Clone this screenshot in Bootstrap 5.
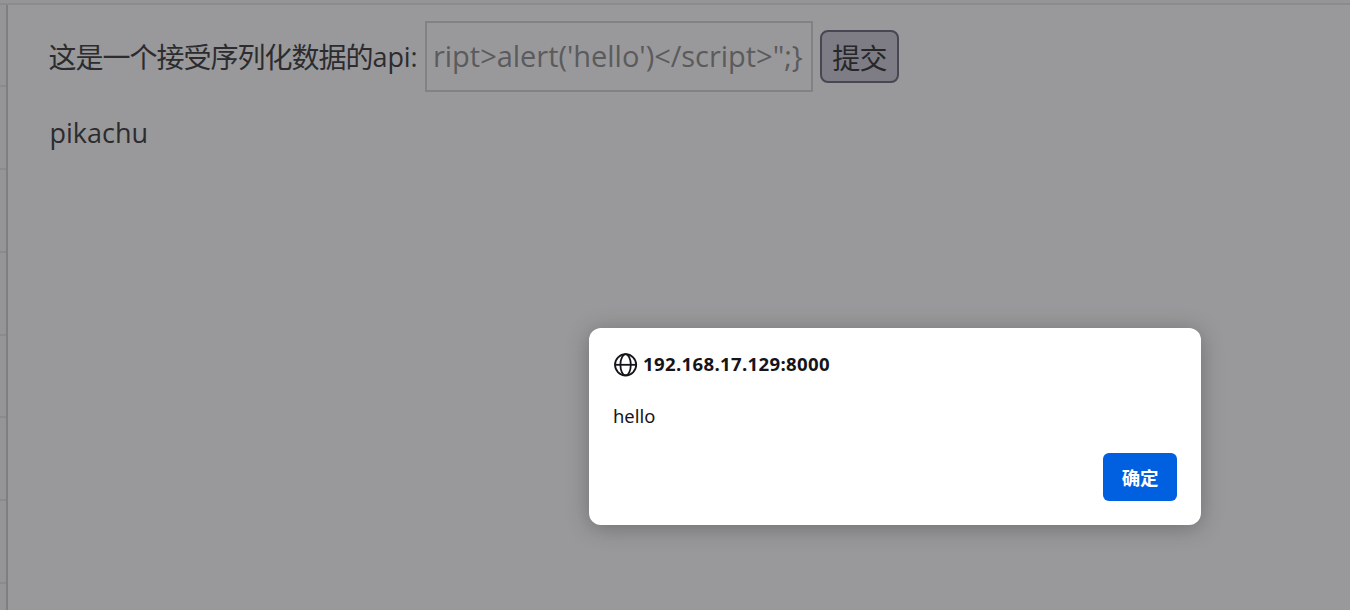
<!DOCTYPE html>
<html lang="zh-CN">
<head>
<meta charset="utf-8">
<meta name="viewport" content="width=device-width, initial-scale=1">
<title>pikachu</title>
<link href="https://cdn.jsdelivr.net/npm/bootstrap@5.3.0/dist/css/bootstrap.min.css" rel="stylesheet">
<style>
body{background:#99999b;color:#2c2c2f;font-family:"Open Sans","Noto Sans CJK SC",sans-serif;font-size:27px;line-height:40px}
.topbar{height:5px;background:#959597;border-bottom:2px solid #8b8b8d}
.side-menu{width:8px;background:#959597;border-right:2px solid #7f7f81;flex:none}
.side-row{height:82.75px;flex:none;border-bottom:2px solid #8b8b8d}
.side-row:first-child{height:82.4px}
.content-area{padding:16px 0 0 41px}
.api-label{width:376px;white-space:nowrap;font-weight:400}
.zh{font-size:28px;letter-spacing:-1px;margin-left:-.5px;vertical-align:-1px;line-height:1}
.en{letter-spacing:-.1px}
.api-input{width:388px;height:71px;border:2px solid #828284;background:transparent;color:#5b5b5d;padding:0 6px 2px;font-size:29px;letter-spacing:-.03px;outline:0}
.api-submit{width:79px;height:53px;border:2px solid #474653;border-radius:8px;background:#7e7d85;color:#27272a;padding:3px 0 0;margin-left:7px;font-size:28px;letter-spacing:-.8px;line-height:47px}
.output{margin-top:21px;padding-left:.5px}
.alert-dialog{left:589px;top:328px;width:612px;height:197px;border-radius:12px;background:#fff;color:#15141a;padding:24px;box-shadow:0 3px 21px rgba(40,40,44,.36);font-size:18px;line-height:25px}
.host{font-weight:700;gap:5px;height:25px;font-size:18.6px;letter-spacing:.33px}
.host span{padding-bottom:2px}
.message{margin-top:26px;height:26px;font-family:"Noto Sans","Open Sans",sans-serif;font-size:18.4px}
.ok-btn{width:74px;height:48px;border:0;border-radius:6px;background:#0060df;color:#fff;font:700 18.5px "Noto Sans CJK SC",sans-serif;letter-spacing:-.3px;padding:0;margin-top:24px}
</style>
</head>
<body class="vh-100 overflow-hidden position-relative">
<div class="d-flex flex-column h-100">
  <header class="topbar flex-shrink-0"></header>
  <div class="d-flex flex-grow-1 overflow-hidden">
    <nav class="side-menu d-flex flex-column overflow-hidden">
      <div class="side-row"></div><div class="side-row"></div><div class="side-row"></div><div class="side-row"></div><div class="side-row"></div><div class="side-row"></div><div class="side-row"></div>
    </nav>
    <main class="content-area flex-grow-1">
      <form class="d-flex align-items-center">
        <label class="api-label" for="data"><span class="zh">这是一个接受序列化数据的</span><span class="en">api:</span></label>
        <input class="api-input" id="data" type="text" value="ript&gt;alert('hello')&lt;/script&gt;&quot;;}">
        <button class="api-submit" type="button">提交</button>
      </form>
      <p class="output mb-0"><span>pikachu</span></p>
    </main>
  </div>
</div>
<section class="alert-dialog position-absolute" role="dialog">
  <div class="host d-flex align-items-center">
    <svg width="25" height="25" viewBox="0 0 25 25" fill="none" stroke="#15141a" stroke-width="1.8"><circle cx="12.6" cy="12.8" r="10.6"/><ellipse cx="12.6" cy="12.8" rx="5.2" ry="10.6"/><path d="M2 12.8h21.2"/></svg>
    <span>192.168.17.129:8000</span>
  </div>
  <div class="message"><span>hello</span></div>
  <div class="d-flex justify-content-end"><button class="ok-btn" type="button">确定</button></div>
</section>
<script src="https://cdn.jsdelivr.net/npm/bootstrap@5.3.0/dist/js/bootstrap.bundle.min.js"></script>
</body>
</html>
